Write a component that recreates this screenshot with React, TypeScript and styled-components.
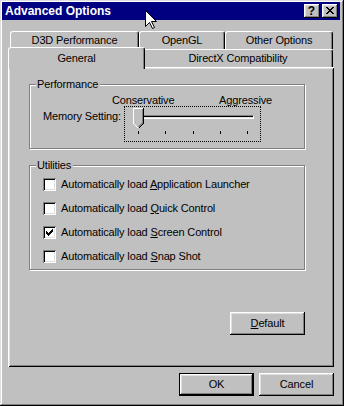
import React from 'react';
import styled, { createGlobalStyle } from 'styled-components';

const GlobalStyle = createGlobalStyle`
  html, body {
    margin: 0;
    padding: 0;
    background: #c0c0c0;
  }
  body {
    font-family: "Liberation Sans", Arial, sans-serif;
    font-size: 11px;
  }
`;

const Window = styled.div`
  position: relative;
  box-sizing: border-box;
  width: 344px;
  height: 406px;
  padding: 2px 4px 3px 2px;
  background: #c0c0c0;
  box-shadow: inset -1px -1px #000, inset 1px 1px #dfdfdf, inset -2px -2px #808080, inset 2px 2px #fff;
  display: flex;
  flex-direction: column;
  font-family: "Liberation Sans", Arial, sans-serif;
  font-size: 11px;
  line-height: 13px;
  letter-spacing: -0.15px;
  color: #000;
`;

const TitleBar = styled.div`
  height: 18px;
  background: #000080;
  display: flex;
  align-items: center;
  padding: 0 2px 0 3px;
  letter-spacing: 0;
`;

const Title = styled.div`
  flex: 1;
  color: #fff;
  font-weight: bold;
  font-size: 12px;
  line-height: 18px;
`;

const TitleButton = styled.div<{ $gap?: number }>`
  box-sizing: border-box;
  width: 16px;
  height: 14px;
  margin-left: ${p => p.$gap ?? 0}px;
  background: #c0c0c0;
  box-shadow: inset -1px -1px #000, inset 1px 1px #fff, inset -2px -2px #808080, inset 2px 2px #dfdfdf;
  display: flex;
  align-items: center;
  justify-content: center;
  font-weight: bold;
  font-size: 12px;
  line-height: 12px;
  padding: 0 1px 1px 0;
`;

const Body = styled.div`
  display: flex;
  flex-direction: column;
  padding: 12px 6px 0 6px;
`;

const TabRow = styled.div<{ $front?: boolean }>`
  display: flex;
  align-items: flex-end;
  height: ${p => (p.$front ? 18 : 17)}px;
  margin: 0 1px 0 2px;
`;

const Tab = styled.div<{ $w: number; $selected?: boolean }>`
  box-sizing: border-box;
  width: ${p => p.$w + (p.$selected ? 4 : 0)}px;
  height: ${p => (p.$selected ? 22 : 18)}px;
  margin: ${p => (p.$selected ? '0 -2px -2px -2px' : '0')};
  position: relative;
  z-index: ${p => (p.$selected ? 2 : 1)};
  background: #c0c0c0;
  border-top: 1px solid #fff;
  border-left: 1px solid #fff;
  border-right: 1px solid #000;
  border-radius: 3px 3px 0 0;
  box-shadow: inset -1px 0 #808080;
  display: flex;
  justify-content: center;
  padding-top: ${p => (p.$selected ? 4 : 2)}px;
  white-space: nowrap;
`;

const Panel = styled.div`
  box-sizing: border-box;
  height: 300px;
  padding: 17px 29px 0 21px;
  background: #c0c0c0;
  box-shadow: inset 1px 1px #fff, inset -1px -1px #000, inset 2px 2px #dfdfdf, inset -2px -2px #808080;
  display: flex;
  flex-direction: column;
`;

const Group = styled.div<{ $h: number; $top?: number }>`
  position: relative;
  box-sizing: border-box;
  height: ${p => p.$h}px;
  margin-top: ${p => p.$top ?? 0}px;
  border: 1px solid #808080;
  box-shadow: inset 1px 1px #fff, 1px 1px #fff;
`;

const GroupLabel = styled.span`
  position: absolute;
  top: -7px;
  left: 6px;
  padding: 0 2px 0 1px;
  background: #c0c0c0;
  line-height: 13px;
`;

const ScaleLabels = styled.div`
  display: flex;
  justify-content: space-between;
  width: 160px;
  height: 12px;
  margin: 9px 0 0 82px;
`;

const SliderRow = styled.div`
  display: flex;
  align-items: flex-start;
  margin-left: 13px;
`;

const RowLabel = styled.div`
  width: 81px;
  padding-top: 4px;
`;

const SliderBox = styled.div`
  box-sizing: border-box;
  width: 137px;
  height: 36px;
  border: 1px dotted #000;
`;

const Track = styled.div`
  position: relative;
  box-sizing: border-box;
  width: 120px;
  height: 4px;
  margin: 8px 0 0 9px;
  border-top: 1px solid #808080;
  border-left: 1px solid #808080;
  border-bottom: 1px solid #fff;
  border-right: 1px solid #fff;
  background: #dfdfdf;
  box-shadow: inset 1px 1px #000;
`;

const Thumb = styled.svg`
  position: absolute;
  left: -2px;
  top: -8px;
`;

const Ticks = styled.div`
  display: flex;
  justify-content: space-between;
  width: 110px;
  height: 3px;
  margin: 12px 0 0 13px;
`;

const Tick = styled.span`
  width: 1px;
  height: 3px;
  background: #000;
`;

const CheckList = styled.div`
  display: flex;
  flex-direction: column;
  padding: 6px 0 0 13px;
`;

const CheckRow = styled.div`
  display: flex;
  align-items: center;
  height: 24px;
  gap: 5px;
`;

const Box = styled.span`
  box-sizing: border-box;
  width: 13px;
  height: 13px;
  background: #fff;
  box-shadow: inset 1px 1px #808080, inset -1px -1px #fff, inset 2px 2px #000, inset -2px -2px #dfdfdf;
  display: flex;
  align-items: center;
  justify-content: center;
`;

const Key = styled.span`
  text-decoration: underline;
  text-underline-offset: 1px;
`;

const Button = styled.div<{ $default?: boolean }>`
  box-sizing: border-box;
  width: 75px;
  height: 23px;
  background: #c0c0c0;
  border: ${p => (p.$default ? '1px solid #000' : 'none')};
  box-shadow: inset -1px -1px #000, inset 1px 1px #fff, inset -2px -2px #808080, inset 2px 2px #dfdfdf;
  display: flex;
  align-items: center;
  justify-content: center;
  padding-bottom: 1px;
`;

const DefaultButton = styled(Button)`
  align-self: flex-end;
  margin-top: 42px;
`;

const Footer = styled.div`
  display: flex;
  justify-content: flex-end;
  gap: 5px;
  margin-top: 6px;
`;

const Cursor = styled.svg`
  position: absolute;
  left: 145px;
  top: 10px;
`;

const closeGlyph = [
  'XX....XX',
  '.XX..XX.',
  '..XXXX..',
  '...XX...',
  '..XXXX..',
  '.XX..XX.',
  'XX....XX',
];

const checkGlyph = [
  '......X',
  '.....XX',
  'X...XXX',
  'XX.XXX.',
  'XXXXX..',
  '.XXX...',
  '..X....',
];

const Pixels = ({ rows }: { rows: string[] }) => (
  <svg width={rows[0].length} height={rows.length} shapeRendering="crispEdges">
    {rows.flatMap((r, y) =>
      r.split('').map((c, x) => (c === 'X' ? <rect key={`${x}-${y}`} x={x} y={y} width={1} height={1} fill="#000" /> : null))
    )}
  </svg>
);

const utilities = [
  { pre: 'Automatically load ', key: 'A', post: 'pplication Launcher', checked: false },
  { pre: 'Automatically load ', key: 'Q', post: 'uick Control', checked: false },
  { pre: 'Automatically load ', key: 'S', post: 'creen Control', checked: true },
  { pre: 'Automatically load ', key: 'S', post: 'nap Shot', checked: false },
];

const App = () => {
  return (
    <Window>
      <GlobalStyle />
      <TitleBar>
        <Title>Advanced Options</Title>
        <TitleButton>?</TitleButton>
        <TitleButton $gap={2}>
          <Pixels rows={closeGlyph} />
        </TitleButton>
      </TitleBar>

      <Body>
        <TabRow>
          <Tab $w={129}>D3D Performance</Tab>
          <Tab $w={86}>OpenGL</Tab>
          <Tab $w={108}>Other Options</Tab>
        </TabRow>
        <TabRow $front>
          <Tab $w={133} $selected>General</Tab>
          <Tab $w={190}>DirectX Compatibility</Tab>
        </TabRow>

        <Panel>
          <Group $h={65}>
            <GroupLabel>Performance</GroupLabel>
            <ScaleLabels>
              <span>Conservative</span>
              <span>Aggressive</span>
            </ScaleLabels>
            <SliderRow>
              <RowLabel>Memory Setting:</RowLabel>
              <SliderBox>
                <Track>
                  <Thumb width="11" height="21" viewBox="0 0 11 21" shapeRendering="crispEdges">
                    <path d="M0 0H11V16L5.5 21.5L0 16Z" fill="#c0c0c0" />
                    <path d="M0.5 16V0.5H10" stroke="#fff" fill="none" />
                    <path d="M0.5 15.5L5.5 20.5" stroke="#fff" fill="none" />
                    <path d="M10.5 0V15.5L5.5 20.5" stroke="#000" fill="none" />
                    <path d="M9.5 1V15L5.5 19" stroke="#808080" fill="none" />
                  </Thumb>
                </Track>
                <Ticks>
                  {[0, 1, 2, 3, 4].map(i => (
                    <Tick key={i} />
                  ))}
                </Ticks>
              </SliderBox>
            </SliderRow>
          </Group>

          <Group $h={105} $top={16}>
            <GroupLabel>Utilities</GroupLabel>
            <CheckList>
              {utilities.map((u, i) => (
                <CheckRow key={i}>
                  <Box>{u.checked && <Pixels rows={checkGlyph} />}</Box>
                  <span>
                    {u.pre}
                    <Key>{u.key}</Key>
                    {u.post}
                  </span>
                </CheckRow>
              ))}
            </CheckList>
          </Group>

          <DefaultButton>
            <span>
              <Key>D</Key>efault
            </span>
          </DefaultButton>
        </Panel>

        <Footer>
          <Button $default>OK</Button>
          <Button>Cancel</Button>
        </Footer>
      </Body>

      <Cursor width="12" height="20" viewBox="0 0 12 20">
        <path d="M0.5 0.5V16.5L4.5 12.5L7.5 18.5L9.5 17.5L6.5 11.5H11.5Z" fill="#fff" stroke="#000" strokeLinejoin="miter" />
      </Cursor>
    </Window>
  );
};

export default App;
